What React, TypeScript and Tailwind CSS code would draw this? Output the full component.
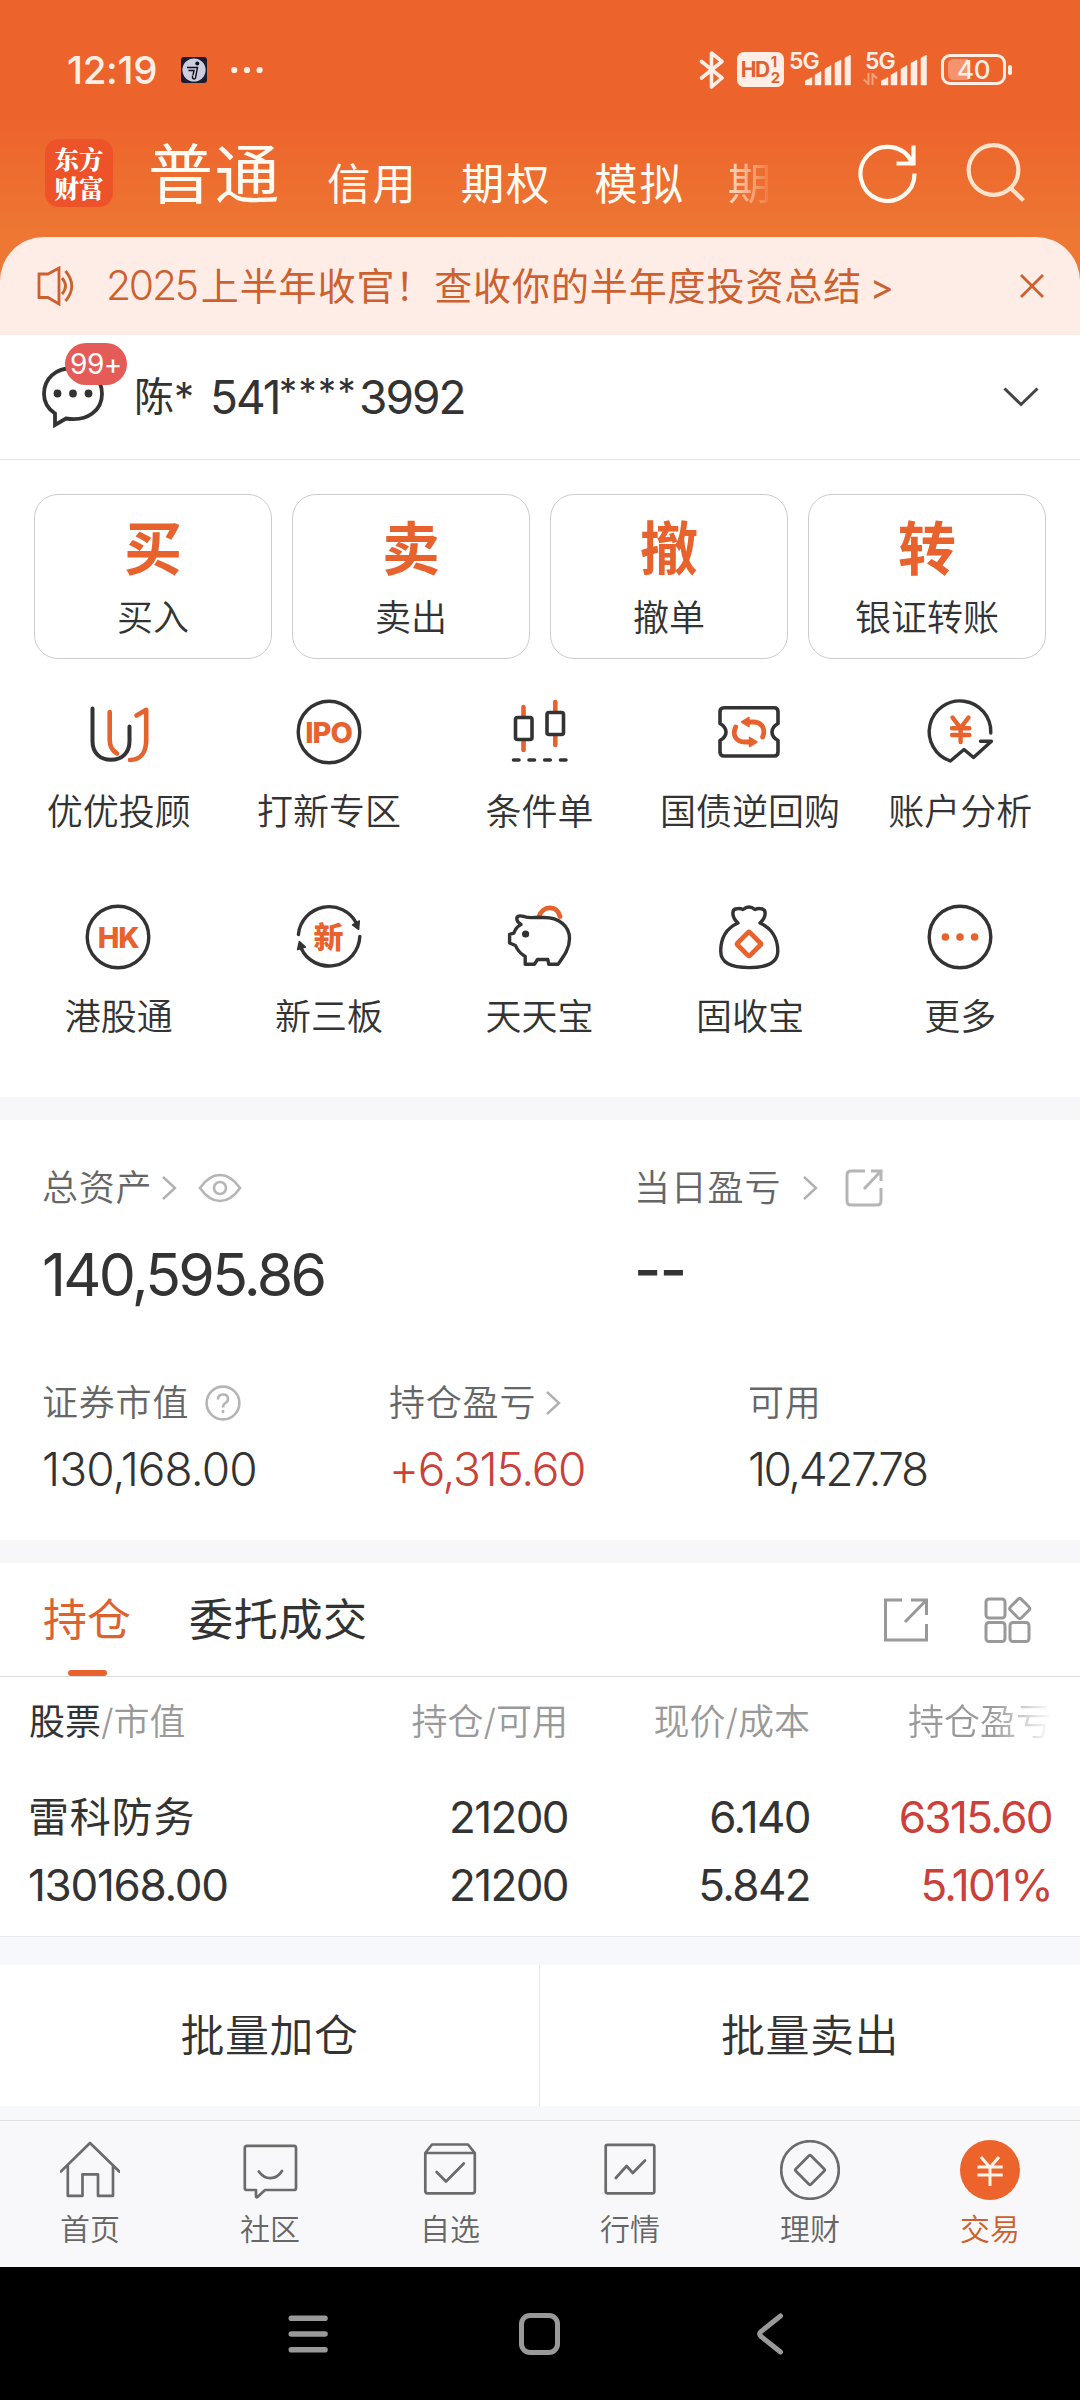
import type { ReactNode } from 'react'

const DARK = '#333333'
const ORANGE = '#e8622d'

// ---------- icons ----------

function Icon({ size = 66, children }: { size?: number; children: ReactNode }) {
  return (
    <svg width={size} height={size} viewBox={`0 0 ${size} ${size}`} fill="none" strokeLinecap="round" strokeLinejoin="round" className="shrink-0 overflow-visible">
      {children}
    </svg>
  )
}

function Ring() {
  return <circle cx="33" cy="33" r="30.8" stroke={DARK} strokeWidth="3.4" />
}

function AdvisorIcon() {
  return (
    <Icon>
      <g strokeWidth="4">
        <path d="M7.5 9.5V42C7.5 54 15 60.8 26 60.8S44.5 54 44.5 42V27.5" stroke={DARK} />
        <path d="M24.7 13V41Q24.7 50 32 54.5" stroke={ORANGE} strokeWidth="4.6" />
        <path d="M51.5 16.5L61.2 10.8V41C61.2 54 55 61 45 61" stroke={ORANGE} strokeWidth="4.6" />
      </g>
    </Icon>
  )
}

function RingText({ text }: { text: string }) {
  return (
    <span className="relative flex h-[66px] w-[66px] items-center justify-center">
      <span className="absolute inset-0"><Icon><Ring /></Icon></span>
      <span className="text-[29px] leading-none font-extrabold tracking-[-1px] text-[#e8622d]">{text}</span>
    </span>
  )
}

function CandleIcon() {
  return (
    <Icon>
      <path d="M17.5 8V17M17.5 42V51M49.3 3V12M49.3 37V46" stroke={ORANGE} strokeWidth="4.6" />
      <rect x="9.5" y="18.5" width="16.5" height="22" rx="2" stroke={DARK} strokeWidth="3.6" />
      <rect x="41" y="13.5" width="16.5" height="22" rx="2" stroke={DARK} strokeWidth="3.6" />
      <path d="M7.5 61H13M23 61H28.5M38.7 61H44.3M54.5 61H60" stroke={DARK} strokeWidth="3.6" />
    </Icon>
  )
}

function RepoIcon() {
  return (
    <Icon>
      <path d="M8 8.7H58Q62 8.7 62 12.7V24.5C54 29 54 37 62 41.5V53Q62 57 58 57H8Q4 57 4 53V41.5C12 37 12 29 4 24.5V12.7Q4 8.7 8 8.7Z" stroke={DARK} strokeWidth="3.6" />
      <path d="M30 23H37C46 23 50 30 46.6 38" stroke={ORANGE} strokeWidth="4.8" />
      <path d="M36 43H29C20 43 16 36 19.6 28" stroke={ORANGE} strokeWidth="4.8" />
      <path d="M25.5 23L33 18.5V27.5ZM41 43L33.5 38.5V47.5Z" fill={ORANGE} stroke={ORANGE} strokeWidth="1.5" />
    </Icon>
  )
}

function AnalysisIcon() {
  return (
    <Icon>
      <path d="M63.8 34A30.8 30.8 0 1 0 23.4 62L37 50.5L46.5 58.5L64.5 42.3H53.5" stroke={DARK} strokeWidth="3.4" />
      <path d="M25.5 18.5L33.5 29L41.5 18.5M25 29.2H42.3M25 36H42.3M33.6 29V43" stroke={ORANGE} strokeWidth="4.4" />
    </Icon>
  )
}

function NewBoardIcon() {
  return (
    <span className="relative flex h-[66px] w-[66px] items-center justify-center">
      <span className="absolute inset-0">
        <Icon>
          <path d="M2.4 30.5A30.8 30.8 0 0 1 60.5 19.5M63.8 32.5A30.8 30.8 0 0 1 5 44" stroke={DARK} strokeWidth="3.4" />
          <path d="M56.5 21L63.3 17L62.6 25.5ZM1.6 45.5L3.4 37.5L9.4 43Z" fill={DARK} stroke={DARK} strokeWidth="1.5" />
        </Icon>
      </span>
      <span className="text-[30px] leading-none font-black text-[#e8622d]">新</span>
    </span>
  )
}

function PigIcon() {
  return (
    <Icon>
      <path d="M33 12.5C36 2 51 0 54 12.5" stroke={ORANGE} strokeWidth="4.8" />
      <path d="M10.8 15C10.5 11.5 14 11.5 18 12.5Q22 14 29 13.5H38C53 13.5 63.5 22 63.5 34.5C63.5 45 58 52 52 60.3H42.8L41.8 55.5H31.5L28.4 60.3H19.2V52.5Q12 48 9.5 41.5L3.6 39V30.3L7.8 29.2Q10 23 15 20.5Q11 18 10.8 15Z" stroke={DARK} strokeWidth="3.4" />
      <circle cx="19.6" cy="30" r="3.6" fill={DARK} />
    </Icon>
  )
}

function BagIcon() {
  return (
    <Icon>
      <path d="M22 19C16 14 15 5.5 20.5 4.8Q24 4 27 5.5Q33 .5 39 5.5Q42 4 45.5 4.8C51 5.5 50 14 44 19C55 24 61.8 34 61.8 47C61.8 59 51 63.6 33 63.6S4.7 59 4.7 47C4.7 34 11 24 22 19Z" stroke={DARK} strokeWidth="3.4" />
      <rect x="24.2" y="31.2" width="17.6" height="17.6" rx="1.5" transform="rotate(45 33 40)" stroke={ORANGE} strokeWidth="4.8" />
    </Icon>
  )
}

function MoreIcon() {
  return (
    <Icon>
      <Ring />
      <g fill={ORANGE}>
        <circle cx="18.4" cy="33" r="3.8" />
        <circle cx="33" cy="33" r="3.8" />
        <circle cx="47.6" cy="33" r="3.8" />
      </g>
    </Icon>
  )
}

function Arrow({ className = '' }: { className?: string }) {
  return (
    <svg width="16" height="24" viewBox="0 0 16 24" fill="none" className={className}>
      <path d="M2 1L14 12L2 23" stroke="#b0b0b0" strokeWidth="2.4" />
    </svg>
  )
}

function Signal() {
  return (
    <svg width="46" height="31" viewBox="0 0 46 31" fill="#ffeee6">
      <path d="M0 30V26L7 22.5V30ZM10 30V20L16 16.5V30ZM20 30V14L26 10.5V30ZM30 30V8L36 5V30ZM40 30V3L45.5 0V30Z" stroke="#ffeee6" strokeWidth=".5" strokeLinejoin="round" />
    </svg>
  )
}

// ---------- status bar and header ----------

function StatusBar() {
  return (
    <div className="flex h-[139px] items-start justify-between pt-[50px] pr-[68px] pl-[67px] text-[#ffeee6]">
      <div className="flex h-10 items-center">
        <span className="w-[91px] text-[38.5px] leading-none font-medium tracking-[-.3px] whitespace-nowrap">12:19</span>
        <svg width="26" height="26" viewBox="0 0 26 26" fill="none" className="ml-[23px]">
          <rect width="26" height="26" rx="3" fill="#1c1c30" />
          <circle cx="13" cy="13" r="11.6" fill="#cdcde2" />
          <circle cx="16.3" cy="6.6" r="2" fill="#111" />
          <path d="M6 10.5H16.5L14.5 21Q13.5 23 11.5 21V18.5M7.5 13.5H13L12 18" stroke="#111" strokeWidth="1.4" />
        </svg>
        <svg width="32" height="8" viewBox="0 0 32 8" fill="currentColor" className="ml-6">
          <circle cx="3.2" cy="4" r="3.1" />
          <circle cx="16" cy="4" r="3.1" />
          <circle cx="28.6" cy="4" r="3.1" />
        </svg>
      </div>

      <div className="flex h-10 items-start">
        <svg width="26" height="40" viewBox="0 0 26 40" fill="none" stroke="currentColor" strokeWidth="3.6" strokeLinecap="round" strokeLinejoin="round">
          <path d="M2.5 11.5L23 28L12.5 37V3L23 11.5L2.5 28" />
        </svg>
        <div className="mt-[2px] ml-3 flex h-[35px] w-[47px] items-center justify-center gap-[2px] rounded-[7px] bg-[#ffeee6] font-bold text-[#e0622f]">
          <span className="text-[21px] leading-none tracking-[-1.4px]">HD</span>
          <span className="flex flex-col text-[15px] leading-[16px]">
            <span>1</span>
            <span>2</span>
          </span>
        </div>
        <div className="relative ml-[5px] h-10 w-[63px]">
          <span className="absolute top-0 left-0 text-[23px] leading-none font-semibold tracking-[-1px]">5G</span>
          <span className="absolute top-[5px] left-[16px]"><Signal /></span>
        </div>
        <div className="relative ml-[13px] h-10 w-[63px]">
          <span className="absolute top-0 left-0 text-[23px] leading-none font-semibold tracking-[-1px]">5G</span>
          <svg width="15" height="12" viewBox="0 0 15 12" fill="none" stroke="#f7a07c" strokeWidth="2" className="absolute top-[23px] left-[-2px]">
            <path d="M5.5 0V11L.8 6.5M9.5 12V1L14 5.5" />
          </svg>
          <span className="absolute top-[5px] left-[16px]"><Signal /></span>
        </div>
        <div className="mt-1 ml-[13px] flex items-center">
          <div className="relative flex h-[31px] w-[65px] items-center justify-center rounded-[9px] border-[3px] border-[#ffeee6]">
            <span className="absolute top-[2px] left-1 h-[21px] w-[20px] rounded-l-[5px] bg-[#f3946f]" />
            <span className="relative text-[26px] leading-none font-medium tracking-[-.5px]">40</span>
          </div>
          <span className="ml-[2px] h-[10px] w-1 rounded-full bg-[#ffeee6]" />
        </div>
      </div>
    </div>
  )
}

function Header() {
  return (
    <div className="h-[237px] bg-linear-to-b from-[#ed632c] from-50% to-[#ed7733]">
      <StatusBar />
      <div className="flex h-[68px] items-end pl-[45px] text-[#fffaf2]">
        <div className="flex h-[68px] w-[68px] flex-col items-center justify-center rounded-[14px] bg-[#ed5229] font-['Noto_Serif_CJK_SC','Noto_Sans_CJK_SC',sans-serif] text-[24.5px] leading-[29px] font-black text-white">
          <span>东方</span>
          <span>财富</span>
        </div>
        <span className="ml-[35px] text-[65px] leading-[64px] tracking-[1.5px]">普通</span>
        <div className="ml-[46px] flex w-[443px] gap-[43px] text-[43.5px] leading-[45px] tracking-[1.8px] whitespace-nowrap">
          <span>信用</span>
          <span>期权</span>
          <span>模拟</span>
          <span className="bg-linear-to-r from-[#ffdcc2] to-[#ed7030] bg-clip-text text-transparent">期</span>
        </div>
        <div className="flex h-[68px] flex-1 items-center gap-[48px] pl-[88px]">
          <svg width="60" height="60" viewBox="0 0 60 60" fill="none" stroke="currentColor" strokeWidth="4.2" className="shrink-0">
            <path d="M56.5 30.5A27 27 0 1 1 54 19.5L55.5 21.5" />
            <path d="M38.5 20.5H55.5V2.5" />
          </svg>
          <svg width="60" height="60" viewBox="0 0 60 60" fill="none" stroke="#ffe3cc" strokeWidth="4.2" className="shrink-0">
            <circle cx="27.5" cy="27" r="24.8" />
            <path d="M44 44.5L57.5 57.5" />
          </svg>
        </div>
      </div>
    </div>
  )
}

function Notice() {
  return (
    <div className="bg-[#ed7733]">
      <div className="flex h-[98px] items-center rounded-t-[44px] bg-[#fdede6] pr-[35px] pl-[37px] text-[#cc612f]">
        <svg width="40" height="40" viewBox="0 0 40 40" fill="none" stroke="currentColor" strokeWidth="2.8">
          <path d="M2 8H11L22 2V38L11 31.5H2ZM25 12Q32 20 25 28M28.5 5Q41 20 28.5 35" />
        </svg>
        <span className="-mt-px ml-[29px] flex-1 text-[38px] leading-none tracking-[.9px] whitespace-nowrap">
          <span className="mr-[4px] text-[41px] font-[350] tracking-[-2.3px]">2025</span>上半年收官！查收你的半年度投资总结
          <span className="ml-2 text-[36px]">&gt;</span>
        </span>
        <svg width="26" height="26" viewBox="0 0 26 26" stroke="currentColor" strokeWidth="2.8">
          <path d="M2 2L24 24M24 2L2 24" />
        </svg>
      </div>
    </div>
  )
}

function Account() {
  return (
    <div className="flex h-[125px] items-center border-b border-[#e5e5e5] pr-[41px] pl-[41px] text-[#333]">
      <div className="relative -mt-px h-[64px] w-[64px]">
        <svg width="64" height="64" viewBox="0 0 64 64" fill="none">
          <path d="M32 3C14 3 3 14 3 29C3 38 8 44.5 14 48.5V60L25 53.5C47 57 61 45 61 29C61 14 50 3 32 3Z" stroke={DARK} strokeWidth="3.8" />
          <g fill={DARK}>
            <circle cx="16.5" cy="28.5" r="3.9" />
            <circle cx="32" cy="28.5" r="3.9" />
            <circle cx="47.5" cy="28.5" r="3.9" />
          </g>
        </svg>
        <span className="absolute top-[-22px] left-[24px] flex h-[42px] w-[62px] items-center justify-center rounded-full bg-[#e45b57] text-[28px] leading-none tracking-[-.5px] text-white">99+</span>
      </div>
      <div className="ml-[29px] flex flex-1 items-center text-[46px] leading-none font-[380] whitespace-nowrap">
        <span className="w-[76px] text-[40px]">陈*</span>
        <span className="w-[69px] tracking-[-2px]">541</span>
        <span className="w-[80px] pb-3 text-[36px] tracking-[1.5px]">****</span>
        <span className="tracking-[-2px]">3992</span>
      </div>
      <svg width="36" height="20" viewBox="0 0 36 20" fill="none" stroke="#444" strokeWidth="3">
        <path d="M1.5 1.5L18 17.5L34.5 1.5" />
      </svg>
    </div>
  )
}

// ---------- shortcuts ----------

const quickActions = [
  { mark: '买', label: '买入' },
  { mark: '卖', label: '卖出' },
  { mark: '撤', label: '撤单' },
  { mark: '转', label: '银证转账' },
]

const services = [
  { label: '优优投顾', icon: <AdvisorIcon /> },
  { label: '打新专区', icon: <RingText text="IPO" /> },
  { label: '条件单', icon: <CandleIcon /> },
  { label: '国债逆回购', icon: <RepoIcon /> },
  { label: '账户分析', icon: <AnalysisIcon /> },
  { label: '港股通', icon: <RingText text="HK" /> },
  { label: '新三板', icon: <NewBoardIcon /> },
  { label: '天天宝', icon: <PigIcon /> },
  { label: '固收宝', icon: <BagIcon /> },
  { label: '更多', icon: <MoreIcon /> },
]

function Shortcuts() {
  return (
    <div className="h-[637px] pt-[34px] text-[#333]">
      <div className="grid grid-cols-4 gap-5 px-[34px]">
        {quickActions.map(a => (
          <div key={a.mark} className="flex h-[165px] flex-col items-center rounded-[24px] border border-[#ccc] pt-[25px]">
            <span className="text-[58px] leading-[58px] font-bold text-[#e8622d]">{a.mark}</span>
            <span className="mt-[20px] text-[36px] leading-[40px] font-[350]">{a.label}</span>
          </div>
        ))}
      </div>
      <div className="mt-[40px] grid grid-cols-5 gap-y-[67px] pr-[15px] pl-[13px]">
        {services.map(s => (
          <div key={s.label} className="flex h-[138px] flex-col items-center justify-between whitespace-nowrap">
            {s.icon}
            <span className="pl-px text-[36px] leading-[50px] font-[350]">{s.label}</span>
          </div>
        ))}
      </div>
    </div>
  )
}

// ---------- assets ----------

function Assets() {
  return (
    <div className="h-[420px] pt-[43px] pl-[42px] text-[36px] font-[350] text-[#666]">
      <div className="flex">
        <div className="w-[592px]">
          <div className="flex h-[50px] items-center tracking-[.8px]">
            总资产
            <Arrow className="ml-[9px]" />
            <svg width="44" height="30" viewBox="0 0 44 30" fill="none" stroke="#b5b5b5" strokeWidth="2.6" className="ml-[21px]">
              <path d="M2 15Q11 2 22 2T42 15Q33 28 22 28T2 15Z" />
              <circle cx="22" cy="15" r="6" />
            </svg>
          </div>
          <p className="mt-[32px] text-[59px] leading-[60px] font-normal tracking-[-2.7px] text-[#333]">140,595.86</p>
        </div>
        <div>
          <div className="flex h-[50px] items-center tracking-[.8px]">
            当日盈亏
            <Arrow className="ml-[21px]" />
            <svg width="38" height="38" viewBox="0 0 38 38" fill="none" stroke="#b5b5b5" strokeWidth="3" className="ml-[27px]">
              <path d="M20 2H6Q2 2 2 6V32Q2 36 6 36H32Q36 36 36 32V19M26 2H36V12M36 2L19 20" />
            </svg>
          </div>
          <p className="mt-[27px] text-[59px] leading-[60px] font-medium tracking-[-1.5px] text-[#333]">--</p>
        </div>
      </div>

      <div className="mt-[73px] flex">
        <div className="w-[347px]">
          <div className="flex h-[50px] items-center tracking-[.8px]">
            证券市值
            <svg width="36" height="36" viewBox="0 0 36 36" fill="none" stroke="#b5b5b5" strokeWidth="2.6" className="ml-[16px]">
              <circle cx="18" cy="18" r="16.4" />
              <path d="M13 14.5Q13 9.5 18 9.5T23 14Q23 16.5 20.5 18T18 22V22.5M18 25V28" />
            </svg>
          </div>
          <p className="mt-[16px] text-[46px] leading-[50px] tracking-[-.9px] text-[#333]">130,168.00</p>
        </div>
        <div className="w-[359px]">
          <div className="flex h-[50px] items-center tracking-[.8px]">
            持仓盈亏
            <Arrow className="ml-[9px]" />
          </div>
          <p className="mt-[16px] text-[46px] leading-[50px] tracking-[-1.3px] text-[#cb4039]">+6,315.60</p>
        </div>
        <div>
          <div className="flex h-[50px] items-center tracking-[.8px]">可用</div>
          <p className="mt-[16px] text-[46px] leading-[50px] tracking-[-2.5px] text-[#333]">10,427.78</p>
        </div>
      </div>
    </div>
  )
}

// ---------- holdings ----------

function Holdings() {
  return (
    <div className="text-[#333]">
      <div className="flex h-[114px] items-center border-b border-[#ddd] pr-[48px] pl-[43px] text-[44px] leading-none whitespace-nowrap">
        <div className="relative flex h-full items-center text-[#dc6330]">
          持仓
          <span className="absolute bottom-0 left-[25px] h-[6px] w-[39px] rounded-[3px] bg-[#e8622d]" />
        </div>
        <span className="ml-[58px] flex-1 tracking-[.7px]">委托成交</span>
        <svg width="46" height="46" viewBox="0 0 46 46" fill="none" stroke="#999" strokeWidth="3">
          <path d="M19 3H2.5V43H43.5V27M28 3H43.5V18M43.5 3L22 25" />
        </svg>
        <svg width="48" height="46" viewBox="0 0 48 46" fill="none" stroke="#999" strokeWidth="3" className="ml-[55px]">
          <rect x="2" y="2" width="19" height="19" rx="3" />
          <rect x="2" y="25.5" width="19" height="19" rx="3" />
          <rect x="26" y="25.5" width="19" height="19" rx="3" />
          <rect x="28" y="3.8" width="15.5" height="15.5" rx="2.5" transform="rotate(45 35.75 11.5)" />
        </svg>
      </div>

      <div className="grid h-[90px] grid-cols-[325px_214px_242px_242px] items-center pl-[29px] text-right text-[36px] leading-none font-[350] text-[#999]">
        <span className="text-left"><span className="font-normal text-[#333]">股票</span>/市值</span>
        <span>持仓/可用</span>
        <span>现价/成本</span>
        <span className="bg-linear-to-r from-[#999] from-75% to-white bg-clip-text text-transparent">持仓盈亏</span>
      </div>

      <div className="grid h-[169px] grid-cols-[326px_214px_242px_242px] content-start pt-[16px] pl-[28px] text-right text-[44px] leading-[68px] font-[380] tracking-[-1.6px]">
        <span className="text-left text-[41px] tracking-[.8px]">雷科防务</span>
        <span>21200</span>
        <span>6.140</span>
        <span className="text-[#cb4039]">6315.60</span>
        <span className="text-left tracking-[-1.3px]">130168.00</span>
        <span>21200</span>
        <span>5.842</span>
        <span className="text-[#cb4039]">5.101%</span>
      </div>

      <div className="h-[29px] border-t border-[#e8eaed] bg-[#f7f8fb]" />
      <div className="grid h-[141px] grid-cols-2 text-[44px] leading-none font-[350] tracking-[.5px]">
        <div className="flex items-center justify-center border-r border-[#e8e8e8]">批量加仓</div>
        <div className="flex items-center justify-center">批量卖出</div>
      </div>
      <div className="h-[14px] bg-[#f7f8fa]" />
    </div>
  )
}

// ---------- bottom navigation ----------

const tabs = [
  { label: '首页', icon: <path d="M.8 31.5L30 3L59.3 31.5M7.8 25.5V55.8H22.5V34.3H38V55.8H53V25.5" /> },
  { label: '社区', icon: <path d="M7 5.8H54Q56 5.8 56 8V48Q56 50 54 50H25L17.5 57Q16 58 16 56V50H7Q4.8 50 4.8 48V8Q4.8 5.8 7 5.8ZM18.8 31.5C25 40.5 36 40.5 42 31" /> },
  { label: '自选', icon: <path d="M5.3 13L12 4.5H48L54.8 13M5.3 13H54.8V51Q54.8 53.3 52.5 53.3H7.5Q5.3 53.3 5.3 51ZM16.6 32L26 41.5L43.8 23.5" /> },
  { label: '行情', icon: <path d="M7.5 4.8H52.5Q54.3 4.8 54.3 6.5V51.5Q54.3 53.3 52.5 53.3H7.5Q5.7 53.3 5.7 51.5V6.5Q5.7 4.8 7.5 4.8ZM15.8 38L26.6 26L32.8 33L45 20.5" /> },
  { label: '理财', icon: <><circle cx="30" cy="30" r="28.8" /><rect x="19.2" y="19.2" width="21.6" height="21.6" rx="1.5" transform="rotate(45 30 30)" /></> },
]

function TabBar() {
  return (
    <div className="grid h-[147px] grid-cols-6 border-t border-[#dfe2e5] bg-[#f8f8fb] pt-[19px] text-[30px] leading-[40px] font-[350] text-[#666]">
      {tabs.map(t => (
        <div key={t.label} className="flex flex-col items-center gap-[9px]">
          <svg width="60" height="60" viewBox="0 0 60 60" fill="none" stroke="#6b6b6b" strokeWidth="2.7" strokeLinecap="round" strokeLinejoin="round">{t.icon}</svg>
          {t.label}
        </div>
      ))}
      <div className="flex flex-col items-center gap-[9px] text-[#cf5f2c]">
        <svg width="60" height="60" viewBox="0 0 60 60" fill="none">
          <circle cx="30" cy="30" r="30" fill="#ed632c" />
          <path d="M21 17L30 27.5L39 17M17.5 27H42.7M17.5 35H42.7M30 27V46" stroke="#fff3ea" strokeWidth="3" />
        </svg>
        交易
      </div>
    </div>
  )
}

function SystemNav() {
  return (
    <div className="flex h-[133px] items-center bg-black pl-[288px]">
      <svg width="40" height="44" viewBox="0 0 40 44" stroke="#999" strokeWidth="5.6" strokeLinecap="round">
        <path d="M3.3 6.3H37M3.3 22H37M3.3 37.7H37" />
      </svg>
      <span className="ml-[191px] h-[42px] w-[41px] rounded-[11px] border-[5px] border-[#999]" />
      <svg width="28" height="44" viewBox="0 0 28 44" fill="none" stroke="#999" strokeWidth="5" strokeLinecap="round" className="ml-[196px]">
        <path d="M24.5 4L5 19.5Q2.5 22 5 24.5L24.5 40" />
      </svg>
    </div>
  )
}

export default function App() {
  return (
    <div className="flex h-[2400px] w-[1080px] flex-col overflow-hidden bg-white font-['Inter','Noto_Sans_CJK_SC',sans-serif]">
      <Header />
      <Notice />
      <Account />
      <Shortcuts />
      <div className="h-[23px] bg-[#f7f7fa]" />
      <Assets />
      <div className="h-[23px] bg-[#f7f7fa]" />
      <Holdings />
      <TabBar />
      <SystemNav />
    </div>
  )
}
